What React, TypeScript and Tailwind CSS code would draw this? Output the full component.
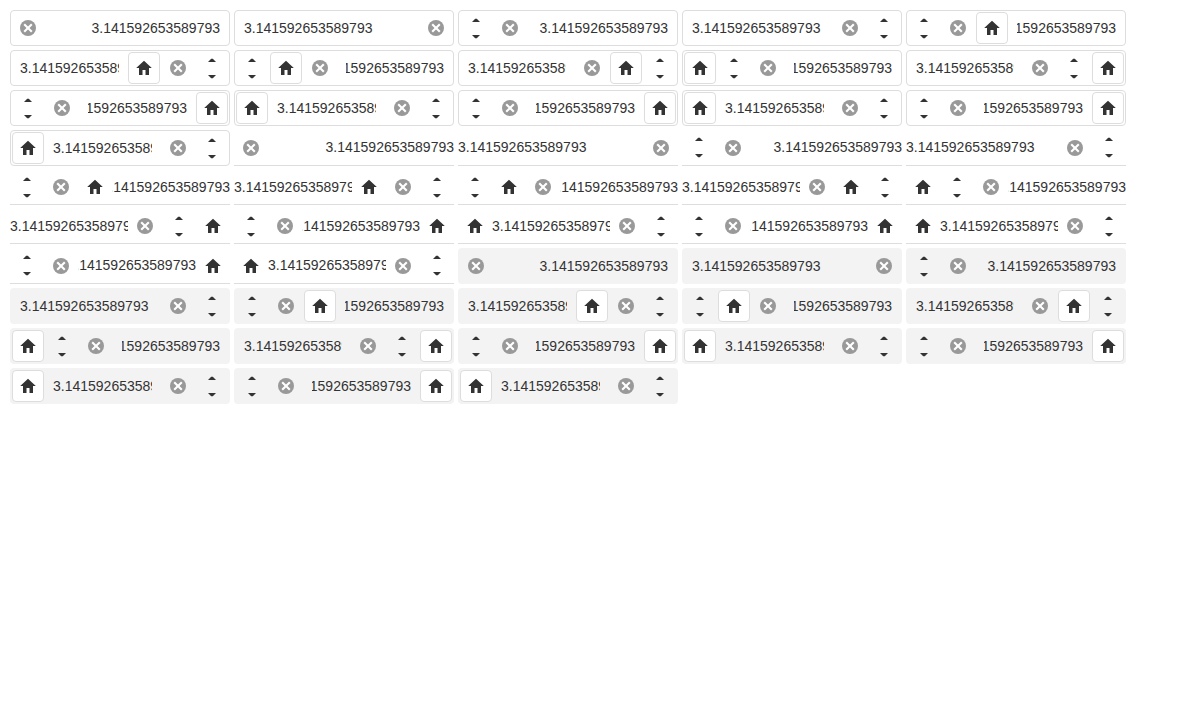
import { useState } from "react";
import clsx from "clsx";

type Variant = "outlined" | "underlined" | "filled";
type Part = "text" | "clear" | "spin" | "home";

const VARIANTS: Variant[] = ["outlined", "underlined", "filled"];

const LAYOUTS: Part[][] = [
  ["text", "clear"],
  ["text", "clear", "spin"],
  ["text", "home", "clear", "spin"],
  ["text", "clear", "home", "spin"],
  ["text", "clear", "spin", "home"],
  ["home", "text", "clear", "spin"],
  ["home", "text", "clear", "spin"],
  ["home", "text", "clear", "spin"],
];

const INITIAL = "3.141592653589793";

function ClearIcon() {
  return (
    <svg viewBox="0 0 18 18" className="size-[18px]" aria-hidden="true">
      <circle cx="9" cy="9" r="8" fill="#999" />
      <path d="M5.2 5.2l7.6 7.6M12.8 5.2l-7.6 7.6" stroke="#fff" strokeWidth="2.1" fill="none" />
    </svg>
  );
}

function HomeIcon() {
  return (
    <svg viewBox="0 0 18 18" className="size-[18px]" aria-hidden="true">
      <path d="M9 1.8L1.2 9H4V16H7.5V11H10.5V16H14V9H16.8Z" fill="#333" />
    </svg>
  );
}

function Triangle({ down }: { down?: boolean }) {
  return (
    <svg viewBox="0 0 8 4" className="h-1 w-2" aria-hidden="true">
      <path d={down ? "M0 0H8L4.8 3.2H3.2Z" : "M0 4H8L4.8 0.8H3.2Z"} fill="#333" />
    </svg>
  );
}

function NumberBox({ variant, parts, rtl }: { variant: Variant; parts: Part[]; rtl: boolean }) {
  const [value, setValue] = useState(INITIAL);
  const underlined = variant === "underlined";
  const step = (delta: number) => setValue((v) => String((Number(v) || 0) + delta));

  return (
    <div
      dir={rtl ? "rtl" : "ltr"}
      className={clsx(
        "flex w-[220px] items-stretch",
        variant === "outlined" && "rounded border border-[#ddd]",
        underlined && "border-b border-[#ddd]",
        variant === "filled" && "rounded border border-transparent bg-[#f3f3f3]",
      )}
    >
      {parts.map((part, i) => {
        if (part === "text") {
          return (
            <input
              key={i}
              type="text"
              inputMode="decimal"
              aria-label="Value"
              value={value}
              onChange={(e) => setValue(e.target.value)}
              className={clsx(
                "h-[34px] min-w-0 flex-1 bg-transparent text-sm text-[#333] outline-none",
                !underlined && "px-[9px]",
              )}
            />
          );
        }
        if (part === "clear") {
          return (
            <button
              key={i}
              type="button"
              aria-label="Clear"
              onClick={() => setValue("")}
              className="flex w-[34px] shrink-0 items-center justify-center"
            >
              <ClearIcon />
            </button>
          );
        }
        if (part === "spin") {
          return (
            <div key={i} className="flex w-[34px] shrink-0 flex-col">
              <button
                type="button"
                aria-label="Increase"
                onClick={() => step(1)}
                className="flex flex-1 items-end justify-center pb-1.5"
              >
                <Triangle />
              </button>
              <button
                type="button"
                aria-label="Decrease"
                onClick={() => step(-1)}
                className="flex flex-1 items-start justify-center pt-[7px]"
              >
                <Triangle down />
              </button>
            </div>
          );
        }
        return (
          <button
            key={i}
            type="button"
            aria-label="Home"
            className={clsx(
              "flex shrink-0 items-center justify-center",
              underlined
                ? "w-[34px]"
                : "my-px size-8 rounded border border-[#ddd] bg-white",
              !underlined && parts[i - 1] !== "text" && "ms-px",
              !underlined && parts[i + 1] !== "text" && "me-px",
            )}
          >
            <HomeIcon />
          </button>
        );
      })}
    </div>
  );
}

export default function App() {
  return (
    <main className="flex flex-wrap gap-1 p-2.5 font-['Liberation_Sans',Arial,sans-serif]">
      {VARIANTS.flatMap((variant) =>
        LAYOUTS.flatMap((parts, i) =>
          [true, false].map((rtl) => (
            <NumberBox key={`${variant}-${i}-${rtl}`} variant={variant} parts={parts} rtl={rtl} />
          )),
        ),
      )}
    </main>
  );
}
